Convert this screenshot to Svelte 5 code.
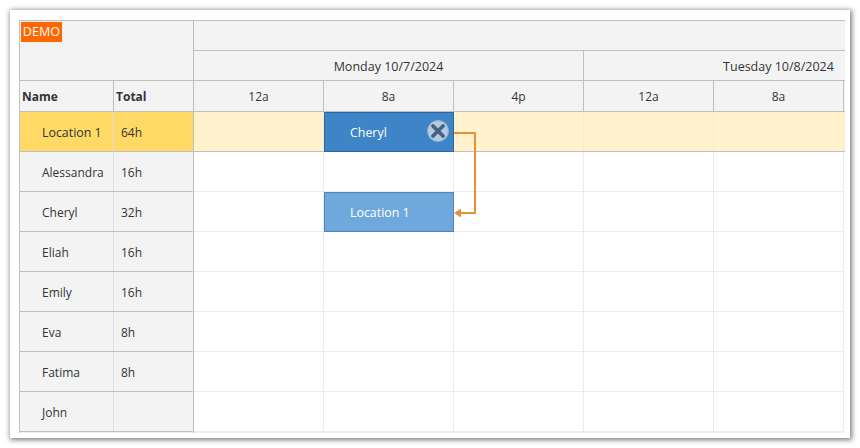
<script lang="ts">
  const rows = [
    { name: 'Location 1', total: '64h', parent: true },
    { name: 'Alessandra', total: '16h' },
    { name: 'Cheryl', total: '32h' },
    { name: 'Eliah', total: '16h' },
    { name: 'Emily', total: '16h' },
    { name: 'Eva', total: '8h' },
    { name: 'Fatima', total: '8h' },
    { name: 'John', total: '' }
  ];
  const hours = ['12a', '8a', '4p', '12a', '8a'];
</script>

<div class="panel">
  <div class="scheduler">
    <div class="side">
      <div class="corner"><span class="demo">DEMO</span></div>
      <div class="side-head">
        <div class="name-col head-cell">Name</div>
        <div class="total-col head-cell">Total</div>
      </div>
      {#each rows as row}
        <div class="side-row" class:parent={row.parent}>
          <div class="name-col name">{row.name}</div>
          <div class="total-col total">{row.total}</div>
        </div>
      {/each}
    </div>

    <div class="main">
      <div class="time-top"></div>
      <div class="days">
        <div class="day">Monday 10/7/2024</div>
        <div class="day">Tuesday 10/8/2024</div>
      </div>
      <div class="hours">
        {#each hours as h}
          <div class="hour">{h}</div>
        {/each}
      </div>
      <div class="grid">
        {#each rows as row}
          <div class="grid-row" class:parent={row.parent}>
            {#each hours as _}
              <div class="cell"></div>
            {/each}
          </div>
        {/each}

        <div class="event first">
          Cheryl
          <span class="delete">
            <svg viewBox="0 0 22 22" width="22" height="22">
              <circle cx="11" cy="11" r="10.5" fill="#b1cbe4" stroke="#8fb0d0" />
              <path d="M6 6 16 16M16 6 6 16" stroke="#45627f" stroke-width="3.8" stroke-linecap="round" />
            </svg>
          </span>
        </div>
        <div class="event second">Location 1</div>

        <svg class="link" width="40" height="100" viewBox="0 0 40 100">
          <path d="M0 21H21V101H6" fill="none" stroke="#e69138" stroke-width="2" />
          <path d="M0 101 7 96.5V105.5Z" fill="#e69138" />
        </svg>
      </div>
    </div>
  </div>
</div>

<style>
  :global(body) {
    margin: 0;
    background: #fff;
  }

  .panel {
    box-sizing: border-box;
    width: 840px;
    height: 428px;
    margin: 10px;
    padding: 10px 5px 0 9px;
    background: #fff;
    box-shadow: 1px 1px 5px 1px rgba(0, 0, 0, 0.5);
    overflow: hidden;
    font-family: 'Open Sans', 'Noto Sans', sans-serif;
    font-size: 12px;
    color: #333;
  }

  .scheduler {
    display: flex;
    height: 413px;
    overflow: hidden;
  }

  .side {
    width: 175px;
    flex: none;
    box-sizing: border-box;
    border-left: 1px solid #c0c0c0;
    border-right: 1px solid #c0c0c0;
    background: #f3f3f3;
  }

  .corner {
    box-sizing: border-box;
    height: 61px;
    border-top: 1px solid #c0c0c0;
    border-bottom: 1px solid #c0c0c0;
  }

  .demo {
    display: block;
    width: 41px;
    height: 20px;
    margin: 1px 0 0 1px;
    background: #ff6600;
    color: #fff;
    font-size: 12.6px;
    line-height: 19px;
    text-align: center;
  }

  .side-head {
    display: flex;
    box-sizing: border-box;
    height: 31px;
    border-bottom: 1px solid #c0c0c0;
  }

  .name-col {
    width: 94px;
    flex: none;
    box-sizing: border-box;
  }

  .total-col {
    flex: 1;
  }

  .head-cell {
    padding-left: 2px;
    line-height: 31px;
    font-weight: 700;
    color: #333;
  }

  .side-head .name-col {
    border-right: 1px solid #c0c0c0;
  }

  .side-row {
    display: flex;
    box-sizing: border-box;
    height: 40px;
    border-bottom: 1px solid #c0c0c0;
    line-height: 41px;
  }

  .side-row .name-col {
    border-right: 1px solid #e0e0e0;
  }

  .side-row.parent {
    background: #ffd966;
  }

  .name {
    padding-left: 22px;
    white-space: nowrap;
  }

  .parent .name {
    font-size: 12.4px;
  }

  .total {
    padding-left: 7px;
  }

  .main {
    flex: 1;
    min-width: 0;
    overflow: hidden;
    background: #f0f0f0;
  }

  .time-top {
    box-sizing: border-box;
    height: 31px;
    border-top: 1px solid #c0c0c0;
    border-bottom: 1px solid #c0c0c0;
    background: #f3f3f3;
  }

  .days {
    display: flex;
    height: 30px;
    box-sizing: border-box;
    border-bottom: 1px solid #c0c0c0;
    background: #f3f3f3;
  }

  .day {
    width: 390px;
    flex: none;
    box-sizing: border-box;
    border-right: 1px solid #c0c0c0;
    font-size: 12.5px;
    line-height: 31px;
    text-align: center;
  }

  .hours {
    display: flex;
    box-sizing: border-box;
    height: 31px;
    border-bottom: 1px solid #c0c0c0;
    background: #f3f3f3;
  }

  .hour {
    width: 130px;
    flex: none;
    box-sizing: border-box;
    border-right: 1px solid #c0c0c0;
    line-height: 31px;
    text-align: center;
  }

  .grid {
    position: relative;
  }

  .grid-row {
    display: flex;
    box-sizing: border-box;
    height: 40px;
    background: #fff;
    border-bottom: 1px solid #ebebeb;
  }

  .grid-row.parent {
    background: #fff2cc;
    border-bottom-color: #c0c0c0;
  }

  .cell {
    width: 130px;
    flex: none;
    box-sizing: border-box;
    border-right: 1px solid #ebebeb;
  }

  .parent .cell {
    border-right-color: #f8ebc8;
  }

  .event {
    position: absolute;
    left: 130px;
    width: 130px;
    height: 40px;
    box-sizing: border-box;
    padding-left: 25px;
    color: #fff;
    font-size: 12.4px;
    line-height: 40px;
  }

  .first {
    top: 0;
    background: #3d85c6;
    border: 1px solid #2e64a0;
  }

  .second {
    top: 80px;
    background: #6fa8dc;
    border: 1px solid #5385b5;
  }

  .delete {
    position: absolute;
    right: 4px;
    top: 7px;
    width: 22px;
    height: 22px;
  }

  .delete svg {
    display: block;
  }

  .link {
    position: absolute;
    left: 260px;
    top: 0;
    overflow: visible;
  }
</style>
